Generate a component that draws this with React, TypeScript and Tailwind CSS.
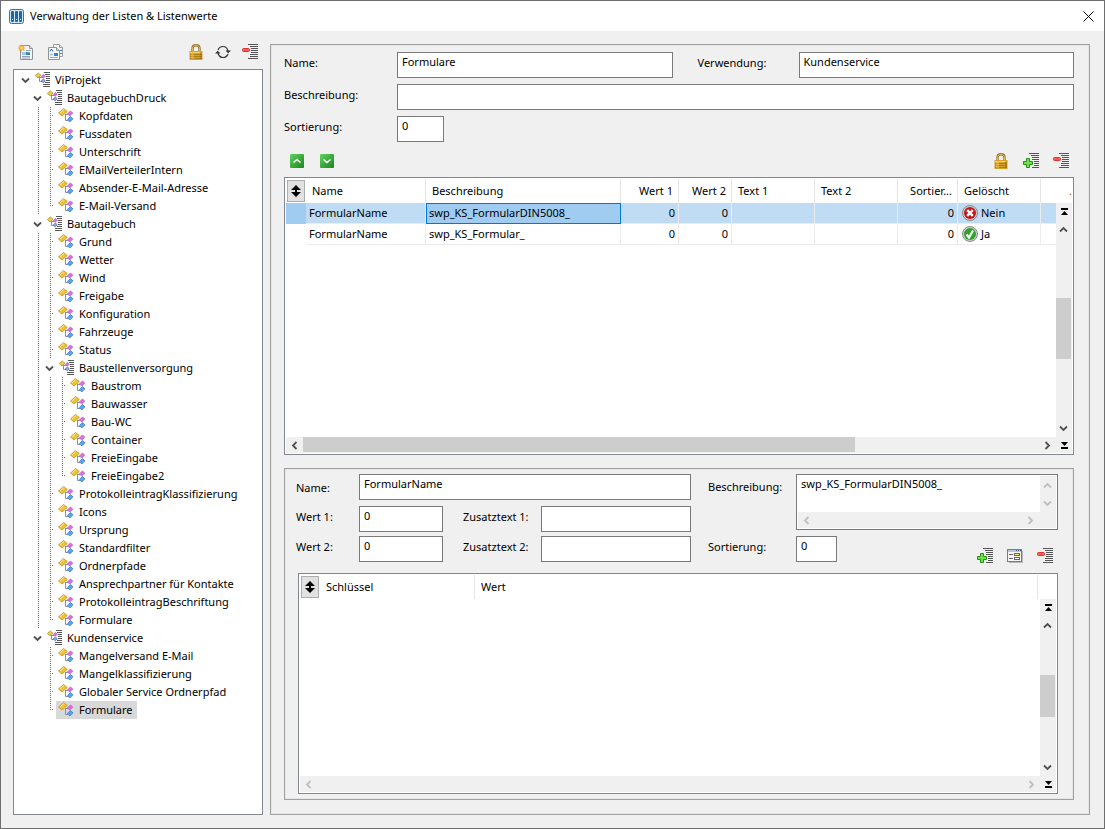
import React from "react";

type TreeNode = {
  title: string;
  selected?: boolean;
  children?: TreeNode[];
};

const leaves = (...titles: string[]): TreeNode[] =>
  titles.map((title) => ({ title }));

const treeData: TreeNode = {
  title: "ViProjekt",
  children: [
    {
      title: "BautagebuchDruck",
      children: leaves(
        "Kopfdaten",
        "Fussdaten",
        "Unterschrift",
        "EMailVerteilerIntern",
        "Absender-E-Mail-Adresse",
        "E-Mail-Versand"
      ),
    },
    {
      title: "Bautagebuch",
      children: [
        ...leaves(
          "Grund",
          "Wetter",
          "Wind",
          "Freigabe",
          "Konfiguration",
          "Fahrzeuge",
          "Status"
        ),
        {
          title: "Baustellenversorgung",
          children: leaves(
            "Baustrom",
            "Bauwasser",
            "Bau-WC",
            "Container",
            "FreieEingabe",
            "FreieEingabe2"
          ),
        },
        ...leaves(
          "ProtokolleintragKlassifizierung",
          "Icons",
          "Ursprung",
          "Standardfilter",
          "Ordnerpfade",
          "Ansprechpartner für Kontakte",
          "ProtokolleintragBeschriftung",
          "Formulare"
        ),
      ],
    },
    {
      title: "Kundenservice",
      children: [
        ...leaves(
          "Mangelversand E-Mail",
          "Mangelklassifizierung",
          "Globaler Service Ordnerpfad"
        ),
        { title: "Formulare", selected: true },
      ],
    },
  ],
};

const listRows = [
  {
    name: "FormularName",
    text: "swp_KS_FormularDIN5008_",
    deleted: "Nein",
    selected: true,
  },
  {
    name: "FormularName",
    text: "swp_KS_Formular_",
    deleted: "Ja",
    selected: false,
  },
];

/* ---------- icons ---------- */

const Svg = ({
  size = 16,
  children,
}: {
  size?: number;
  children: React.ReactNode;
}) => (
  <svg
    width={size}
    height={size}
    viewBox={`0 0 ${size} ${size}`}
    className="block shrink-0"
    aria-hidden="true"
  >
    {children}
  </svg>
);

const AppIcon = () => (
  <Svg size={15}>
    <rect x="0.5" y="0.5" width="14" height="14" rx="2" fill="#d5e8f7" stroke="#1f78c0" />
    <rect x="2" y="2" width="3" height="11" rx="1" fill="#1c68a8" />
    <rect x="6" y="2" width="3" height="11" rx="1" fill="#1c68a8" />
    <rect x="10" y="2" width="3" height="11" rx="1" fill="#1c68a8" />
    <path d="M3 10h1v1H3zM7 10h1v1H7zM11 10h1v1h-1z" fill="#fff" />
  </Svg>
);

const NewIcon = () => (
  <Svg>
    <path d="M2.5 1.5h9l3 3v11h-12z" fill="#f4f6f8" stroke="#8d9299" />
    <path d="M11.5 1.5v3h3" fill="#dfe3e8" stroke="#8d9299" />
    <path d="M8 6.5h5M4 12.5h8M4 14h8" stroke="#9aa4b0" />
    <path d="M4 8h4v3H4z" fill="#aac5e2" />
    <path d="M8 8h4v3H8z" fill="#3b7fc4" />
    <path d="M9 8h3v1H9z" fill="#57b7a8" />
    <path
      d="M3.500 0l1 2 2-1-1 2 2 1-2 1 1 2-2-1-1 2-1-2-2 1 1-2-2-1 2-1-1-2 2 1z"
      fill="#f6a821"
    />
    <circle cx="3.500" cy="4" r="1.500" fill="#ffd65c" />
  </Svg>
);

const CopyIcon = () => (
  <Svg>
    <path d="M5.500 0.500h6l3 3v9h-9z" fill="#f4f6f8" stroke="#9a9fa6" />
    <path d="M11.500 0.500v3h3" fill="#dfe3e8" stroke="#9a9fa6" />
    <path d="M12 6.500h2M12 9.500h2" stroke="#3b7fc4" />
    <path d="M0.500 3.500h8l3 3v9h-11z" fill="#fafbfc" stroke="#8d9299" />
    <path d="M8.500 3.500v3h3" fill="#dfe3e8" stroke="#8d9299" />
    <path d="M2 7.500l1-2h1l1 2" stroke="#3564a8" fill="none" />
    <path d="M2 9.500h3v2H2z" fill="#aac5e2" />
    <path d="M6 9h4v3H6z" fill="#3b7fc4" />
    <path d="M2 13.500h8" stroke="#9aa4b0" />
  </Svg>
);

const LockIcon = () => (
  <Svg>
    <path
      d="M4.500 8V4.500C4.500 2.500 6 1.300 8 1.300s3.500 1.200 3.500 3.200V8"
      fill="none"
      stroke="#94752c"
      strokeWidth="2.400"
    />
    <path
      d="M4.500 8V4.500C4.500 2.500 6 1.300 8 1.300s3.500 1.200 3.500 3.200V8"
      fill="none"
      stroke="#e0bd62"
      strokeWidth="1"
    />
    <rect x="1.500" y="7" width="13" height="9" fill="#d6a22c" />
    <path d="M2 8.500h12" stroke="#f3d069" />
    <path d="M2 10.500h12M2 12.500h12M2 14.500h12" stroke="#b17e16" />
    <path d="M3 8h3v7H3z" fill="#f0c850" opacity="0.500" />
    <path d="M12 8h2v7h-2z" fill="#8a5f10" opacity="0.400" />
  </Svg>
);

const RefreshIcon = () => (
  <Svg>
    <path
      d="M3 6C4 3.500 5.700 2.500 8 2.500S12.300 4 13 7M13 10c-1 2.500-2.700 3.500-5 3.500S3.700 12 3 9"
      fill="none"
      stroke="#333"
      strokeWidth="1.200"
    />
    <path d="M10.500 6.500H16L13.200 9.300zM0 9.500h5.500L2.700 6.700z" fill="#333" />
  </Svg>
);

const Lines = () => (
  <path
    d="M6 0h10v1H6zM8 2h8v1H8zM8 4h8v1H8zM8 6h8v1H8zM8 8h8v1H8zM8 10h8v1H8zM8 12h8v1H8zM6 14h10v1H6z"
    fill="#555"
  />
);

const RemoveIcon = () => (
  <Svg>
    <Lines />
    <rect x="0" y="4" width="9" height="5" fill="#f0f0f0" />
    <rect x="0.500" y="4.500" width="7" height="3" rx="1" fill="#ff5a52" stroke="#e03238" />
  </Svg>
);

const AddIcon = () => (
  <Svg>
    <Lines />
    <path d="M2 4h7v3h2v6H9v3H2z" fill="#f0f0f0" />
    <path
      d="M3.500 5.500h3v3h3v3h-3v3h-3v-3h-3v-3h3z"
      fill="#6fe04a"
      stroke="#1f9416"
    />
  </Svg>
);

const FormIcon = () => (
  <Svg>
    <path d="M2 3h14v12H2z" fill="#b5b9bf" />
    <rect x="0.500" y="1.500" width="14" height="12" fill="#f5f5f2" stroke="#777c85" />
    <path d="M1 2h13v2H1z" fill="#b9c6d8" />
    <path d="M9 2h1v1H9zM11 2h1v1h-1zM13 2h1v1h-1z" fill="#46608c" />
    <path d="M2 6.500h4M2 10.500h4" stroke="#666" />
    <rect x="7.500" y="5.500" width="5" height="2" fill="#fff26b" stroke="#666" />
    <rect x="7.500" y="9.500" width="5" height="2" fill="#fff" stroke="#666" />
  </Svg>
);

const LeafIcon = () => (
  <Svg>
    <path d="M7.500 6v6.500H10M7.500 6.500H10" fill="none" stroke="#7f92a6" />
    <path d="M0.500 5l5-4.500L9.300 3.500 4 8z" fill="#f2c12e" stroke="#c79a26" strokeWidth="0.900" />
    <path d="M2 5l4-3.500" stroke="#ffe9a0" />
    <path d="M9.400 6l3-3 2.400 2-3 3z" fill="#e36be6" stroke="#b552c4" strokeWidth="0.700" />
    <path d="M9.400 11.500l3-3 2.600 2.300-3.200 3.200z" fill="#57a8f2" stroke="#2f6cc0" strokeWidth="0.700" />
  </Svg>
);

const FolderIcon = () => (
  <Svg>
    <path
      d="M10 0h6v1h-6zM11 2h5v1h-5zM12 4h4v1h-4zM12 6h4v1h-4zM12 8h4v1h-4zM11 10h5v1h-5zM9 12h7v1H9zM9 14h7v1H9z"
      fill="#555"
    />
    <path d="M5.500 5v4.500H8M5.500 5.500H8" fill="none" stroke="#7f92a6" />
    <path d="M1.300 3.500l3-2.500L7 3.200 4 6z" fill="#e8cc48" stroke="#b49a30" strokeWidth="0.800" />
    <path d="M7.300 4.500l2-2 2 1.800-2 2z" fill="#e36be6" stroke="#b552c4" strokeWidth="0.700" />
    <path d="M7.300 9l2-2 2 1.800-2 2z" fill="#7fb2e8" stroke="#4a55b8" strokeWidth="0.700" />
  </Svg>
);

const ArrowBox = ({ up }: { up?: boolean }) => (
  <Svg size={14}>
    <defs>
      <linearGradient id="green" x1="0" y1="0" x2="1" y2="1">
        <stop offset="0" stopColor="#5fd45a" />
        <stop offset="1" stopColor="#1c8423" />
      </linearGradient>
    </defs>
    <rect width="14" height="14" rx="1" fill="url(#green)" />
    <path
      d={up ? "M3.500 8.500L7 5.500l3.500 3" : "M3.500 5.500L7 8.500l3.500-3"}
      fill="none"
      stroke="#fff"
      strokeWidth="1.600"
    />
  </Svg>
);

const SortIcon = () => (
  <Svg size={12}>
    <path d="M6 0l5 5H7v2h4l-5 5-5-5h4V5H1z" fill="#000" />
  </Svg>
);

const NoIcon = () => (
  <Svg>
    <circle cx="8" cy="8" r="7.500" fill="#cfcfcf" stroke="#8a8a8a" />
    <circle cx="8" cy="8" r="6" fill="#c5161d" />
    <path d="M5.200 5.200l5.600 5.600M10.800 5.200l-5.600 5.600" stroke="#fff" strokeWidth="2.400" />
  </Svg>
);

const YesIcon = () => (
  <Svg>
    <circle cx="8" cy="8" r="7.500" fill="#cfcfcf" stroke="#8a8a8a" />
    <circle cx="8" cy="8" r="6" fill="#2fa32b" />
    <path d="M4.500 8.500l2.500 3 4-7" fill="none" stroke="#fff" strokeWidth="2.200" />
  </Svg>
);

const chevrons = {
  up: "M1 6.500l3.500-3.500L8 6.500",
  down: "M1 2.500L4.500 6 8 2.500",
  left: "M6.500 1L3 4.500 6.500 8",
  right: "M2.500 1L6 4.500 2.500 8",
};

const Chevron = ({
  dir,
  color = "#505050",
}: {
  dir: keyof typeof chevrons;
  color?: string;
}) => (
  <Svg size={9}>
    <path d={chevrons[dir]} fill="none" stroke={color} strokeWidth="1.800" />
  </Svg>
);

const JumpIcon = ({ down }: { down?: boolean }) => (
  <Svg size={9}>
    <path
      d={down ? "M2 1h7L5.500 5zM2 6h7v2H2z" : "M2 1h7v2H2zM5.500 4L9 8H2z"}
      fill="#000"
    />
  </Svg>
);

/* ---------- tree ---------- */

const Guide = ({ half, stub }: { half?: boolean; stub?: boolean }) => (
  <span className="flex h-[18px] w-3 shrink-0 pl-1.5">
    <span
      className={
        (half ? "h-2.5" : "h-[18px]") +
        " w-px bg-[repeating-linear-gradient(to_bottom,#707070_0_1px,transparent_1px_2px)]"
      }
    />
    {stub && <span className="mt-2 ml-px h-px w-px bg-[#707070]" />}
  </span>
);

const Branch = ({
  node,
  guides = [],
  last = true,
}: {
  node: TreeNode;
  guides?: boolean[];
  last?: boolean;
}) => {
  const kids = node.children;
  return (
    <li role="treeitem" aria-expanded={kids ? true : undefined}>
      <div className="flex h-[18px] items-center">
        {guides.map((on, i) =>
          on ? <Guide key={i} /> : <span key={i} className="w-3 shrink-0" />
        )}
        {kids ? (
          <button aria-label="Zuklappen" className="w-3 shrink-0 pl-px">
            <Chevron dir="down" />
          </button>
        ) : (
          <Guide half={last} stub />
        )}
        <span
          className={
            "flex h-[18px] items-center gap-[5px] pr-1 pl-0.5 whitespace-nowrap" +
            (node.selected ? " bg-[#d9d9d9]" : "")
          }
        >
          {kids ? <FolderIcon /> : <LeafIcon />}
          {node.title}
        </span>
      </div>
      {kids && (
        <ul role="group">
          {kids.map((kid, i) => (
            <Branch
              key={i}
              node={kid}
              guides={[...guides, guides.length > 0 && !last]}
              last={i === kids.length - 1}
            />
          ))}
        </ul>
      )}
    </li>
  );
};

/* ---------- form parts ---------- */

const Label = ({
  htmlFor,
  className,
  children,
}: {
  htmlFor: string;
  className: string;
  children: React.ReactNode;
}) => (
  <label htmlFor={htmlFor} className={"shrink-0 " + className}>
    {children}
  </label>
);

const Field = ({
  id,
  value = "",
  className,
}: {
  id: string;
  value?: string;
  className: string;
}) => (
  <input
    id={id}
    type="text"
    defaultValue={value}
    className={
      "h-[26px] min-w-0 border border-[#7a7a7a] bg-white px-1 pb-[7px] outline-none " +
      className
    }
  />
);

const IconButton = ({
  label,
  children,
}: {
  label: string;
  children: React.ReactNode;
}) => (
  <button aria-label={label} title={label} className="shrink-0">
    {children}
  </button>
);

const VScroll = ({ thumb }: { thumb: string }) => (
  <div className="flex w-4 flex-1 flex-col items-center bg-[#f0f0f0] pr-px">
    <button aria-label="Zum Anfang" className="flex h-[17px] items-center">
      <JumpIcon />
    </button>
    <button aria-label="Nach oben" className="flex h-[18px] items-center">
      <Chevron dir="up" />
    </button>
    <div className={"my-auto w-full bg-[#cdcdcd] " + thumb} />
    <button aria-label="Nach unten" className="flex h-[18px] items-center">
      <Chevron dir="down" />
    </button>
  </div>
);

const HScroll = ({ thumb }: { thumb?: boolean }) => {
  const color = thumb ? "#505050" : "#bfbfbf";
  return (
    <div className="flex h-4 bg-[#f0f0f0]">
      <button aria-label="Nach links" className="flex w-[17px] items-center justify-center">
        <Chevron dir="left" color={color} />
      </button>
      <div className="flex-1">
        {thumb && <div className="h-[15px] w-3/4 bg-[#cdcdcd]" />}
      </div>
      <button aria-label="Nach rechts" className="flex w-[17px] items-center justify-center">
        <Chevron dir="right" color={color} />
      </button>
      <button aria-label="Zum Ende" className="flex w-4 items-center justify-center pr-px">
        <JumpIcon down />
      </button>
    </div>
  );
};

const SortButton = () => (
  <button
    aria-label="Sortieren"
    className="mx-px my-px flex h-[22px] w-[18px] items-center justify-center border border-[#adadad] bg-[#e1e1e1]"
  >
    <SortIcon />
  </button>
);

const Th = ({
  right,
  children,
}: {
  right?: boolean;
  children?: React.ReactNode;
}) => (
  <th
    className={
      "border-r border-[#e5e5e5] font-normal whitespace-nowrap " +
      (right ? "pr-[5px] text-right" : "pl-1.5 text-left")
    }
  >
    {children}
  </th>
);

const cell = "border-r border-b border-[#ececec] px-[3px] whitespace-nowrap";

const ListTable = () => (
  <div className="flex min-h-[240px] flex-1 flex-col border border-[#828790] bg-white p-px">
    <div className="flex flex-1">
      <div className="min-w-0 flex-1 overflow-hidden">
        <table className="w-full table-fixed border-separate border-spacing-0">
          <colgroup>
            <col className="w-5" />
            <col className="w-[120px]" />
            <col className="w-[195px]" />
            <col className="w-[58px]" />
            <col className="w-[53px]" />
            <col className="w-[83px]" />
            <col className="w-[83px]" />
            <col className="w-[60px]" />
            <col className="w-[83px]" />
            <col />
          </colgroup>
          <thead>
            <tr className="h-6">
              <th className="p-0">
                <SortButton />
              </th>
              <Th>Name</Th>
              <Th>Beschreibung</Th>
              <Th right>Wert 1</Th>
              <Th right>Wert 2</Th>
              <Th>Text 1</Th>
              <Th>Text 2</Th>
              <Th right>Sortier...</Th>
              <Th>Gelöscht</Th>
              <th />
            </tr>
          </thead>
          <tbody>
            {listRows.map((row, i) => (
              <tr
                key={i}
                className={"h-[21px] " + (row.selected ? "bg-[#bfdcf4]" : "")}
              >
                <td className={row.selected ? "bg-[#9fccf0]" : ""} />
                <td className={cell}>{row.name}</td>
                <td
                  className={
                    row.selected
                      ? "border border-[#0078d7] bg-[#9fccf0] px-0.5 pb-px whitespace-nowrap"
                      : cell
                  }
                >
                  {row.text}
                </td>
                <td className={cell + " text-right"}>0</td>
                <td className={cell + " text-right"}>0</td>
                <td className={cell} />
                <td className={cell} />
                <td className={cell + " text-right"}>0</td>
                <td className={cell}>
                  <span className="flex items-center gap-[3px] pl-px">
                    {row.deleted === "Ja" ? <YesIcon /> : <NoIcon />}
                    {row.deleted}
                  </span>
                </td>
                <td className="border-b border-[#ececec]" />
              </tr>
            ))}
          </tbody>
        </table>
      </div>
      <div className="flex w-4 flex-col">
        <div className="h-6 text-right leading-6 text-[#a06a2c]">.</div>
        <VScroll thumb="h-[61px]" />
      </div>
    </div>
    <HScroll thumb />
  </div>
);

const KeyTable = () => (
  <div className="ml-0.5 flex min-h-[221px] flex-col border border-[#828790] bg-white p-px">
    <div className="flex flex-1">
      <div className="flex-1 pr-0.5">
        <table className="w-full table-fixed border-separate border-spacing-0">
          <colgroup>
            <col className="w-5" />
            <col className="w-[155px]" />
            <col />
          </colgroup>
          <thead>
            <tr className="h-6">
              <th className="p-0">
                <SortButton />
              </th>
              <Th>Schlüssel</Th>
              <Th>Wert</Th>
            </tr>
          </thead>
        </table>
      </div>
      <div className="flex w-4 flex-col pt-6">
        <VScroll thumb="h-[42px]" />
      </div>
    </div>
    <HScroll />
  </div>
);

const group =
  "flex flex-col border border-[#a0a0a0] shadow-[inset_0_0_0_1px_#e6e6e6]";

const Details = () => (
  <section className={group + " mt-[13px] pt-[5px] pr-[15px] pb-[5px] pl-[11px]"}>
    <div className="flex gap-[17px]">
      <div className="min-w-0 flex-1">
        <div className="flex">
          <Label htmlFor="d-name" className="w-[63px] leading-7">Name:</Label>
          <Field id="d-name" value="FormularName" className="flex-1" />
        </div>
        <div className="mt-1 flex">
          <Label htmlFor="d-wert1" className="w-[63px] leading-[22px]">Wert 1:</Label>
          <Field id="d-wert1" value="0" className="w-[84px]" />
          <Label htmlFor="d-zusatz1" className="ml-5 w-[78px] leading-[22px]">Zusatztext 1:</Label>
          <Field id="d-zusatz1" className="flex-1" />
        </div>
        <div className="mt-1 flex">
          <Label htmlFor="d-wert2" className="w-[63px] leading-[22px]">Wert 2:</Label>
          <Field id="d-wert2" value="0" className="w-[84px]" />
          <Label htmlFor="d-zusatz2" className="ml-5 w-[78px] leading-[22px]">Zusatztext 2:</Label>
          <Field id="d-zusatz2" className="flex-1" />
        </div>
      </div>
      <div className="w-[350px] shrink-0">
        <div className="flex">
          <Label htmlFor="d-text" className="w-[88px] leading-[26px]">Beschreibung:</Label>
          <div className="flex h-14 flex-1 flex-col border border-[#7a7a7a] bg-white p-px">
            <div className="flex flex-1">
              <textarea
                id="d-text"
                defaultValue="swp_KS_FormularDIN5008_"
                className="min-w-0 flex-1 resize-none overflow-hidden px-[3px] leading-4 outline-none"
              />
              <div className="flex w-4 flex-col items-center justify-around bg-[#f0f0f0] pr-px">
                <Chevron dir="up" color="#bfbfbf" />
                <Chevron dir="down" color="#bfbfbf" />
              </div>
            </div>
            <div className="flex h-4 items-center justify-between bg-[#f0f0f0] pr-[21px] pl-1">
              <Chevron dir="left" color="#bfbfbf" />
              <Chevron dir="right" color="#bfbfbf" />
            </div>
          </div>
        </div>
        <div className="mt-1.5 flex">
          <Label htmlFor="d-sort" className="w-[88px] leading-[22px]">Sortierung:</Label>
          <Field id="d-sort" value="0" className="w-[41px]" />
          <div className="flex flex-1 justify-end gap-3.5 pt-3 pr-[5px]">
            <IconButton label="Hinzufügen"><AddIcon /></IconButton>
            <IconButton label="Bearbeiten"><FormIcon /></IconButton>
            <IconButton label="Entfernen"><RemoveIcon /></IconButton>
          </div>
        </div>
      </div>
    </div>
    <div className="mt-[9px] flex flex-col">
      <KeyTable />
    </div>
  </section>
);

const App = () => {
  return (
    <div className="flex min-h-screen flex-col border border-[#6e6e6e] bg-[#f0f0f0] font-['Noto_Sans','Open_Sans',sans-serif] text-[11px] leading-4 text-black">
      <header className="flex h-[30px] items-center bg-white pr-2.5 pl-2">
        <AppIcon />
        <h1 className="ml-1.5 flex-1">Verwaltung der Listen &amp; Listenwerte</h1>
        <button aria-label="Schließen">
          <Svg size={11}>
            <path d="M0.500 0.500l10 10M10.500 0.500l-10 10" stroke="#000" />
          </Svg>
        </button>
      </header>
      <main className="flex flex-1 gap-[7px] pt-[13px] pr-3.5 pb-[13px] pl-3">
        <aside className="flex w-[250px] shrink-0 flex-col">
          <div className="flex h-[25px] items-start px-[5px]">
            <IconButton label="Neu"><NewIcon /></IconButton>
            <span className="w-3.5" />
            <IconButton label="Kopieren"><CopyIcon /></IconButton>
            <div className="flex flex-1 justify-end gap-[11px]">
              <IconButton label="Sperren"><LockIcon /></IconButton>
              <IconButton label="Aktualisieren"><RefreshIcon /></IconButton>
              <IconButton label="Entfernen"><RemoveIcon /></IconButton>
            </div>
          </div>
          <ul role="tree" className="flex-1 border border-[#828790] bg-white pt-px pl-1.5">
            <Branch node={treeData} />
          </ul>
        </aside>
        <section className={group + " min-w-0 flex-1 pt-[7px] pr-[15px] pb-3.5 pl-[13px]"}>
          <div className="flex flex-col gap-1.5">
            <div className="flex">
              <Label htmlFor="name" className="w-[113px] leading-[22px]">Name:</Label>
              <Field id="name" value="Formulare" className="flex-1" />
              <Label htmlFor="usage" className="ml-[25px] w-[101px] leading-[22px]">Verwendung:</Label>
              <Field id="usage" value="Kundenservice" className="flex-1" />
            </div>
            <div className="flex">
              <Label htmlFor="desc" className="w-[113px] leading-[22px]">Beschreibung:</Label>
              <Field id="desc" className="flex-1" />
            </div>
            <div className="flex">
              <Label htmlFor="sort" className="w-[113px] leading-[22px]">Sortierung:</Label>
              <Field id="sort" value="0" className="w-[47px]" />
            </div>
          </div>
          <div className="flex h-[35px] items-center gap-4 pt-[3px] pr-[5px] pl-1.5">
            <IconButton label="Nach oben"><ArrowBox up /></IconButton>
            <IconButton label="Nach unten"><ArrowBox /></IconButton>
            <div className="flex flex-1 justify-end gap-3.5">
              <IconButton label="Sperren"><LockIcon /></IconButton>
              <IconButton label="Hinzufügen"><AddIcon /></IconButton>
              <IconButton label="Entfernen"><RemoveIcon /></IconButton>
            </div>
          </div>
          <ListTable />
          <Details />
        </section>
      </main>
    </div>
  );
};

export default App;
